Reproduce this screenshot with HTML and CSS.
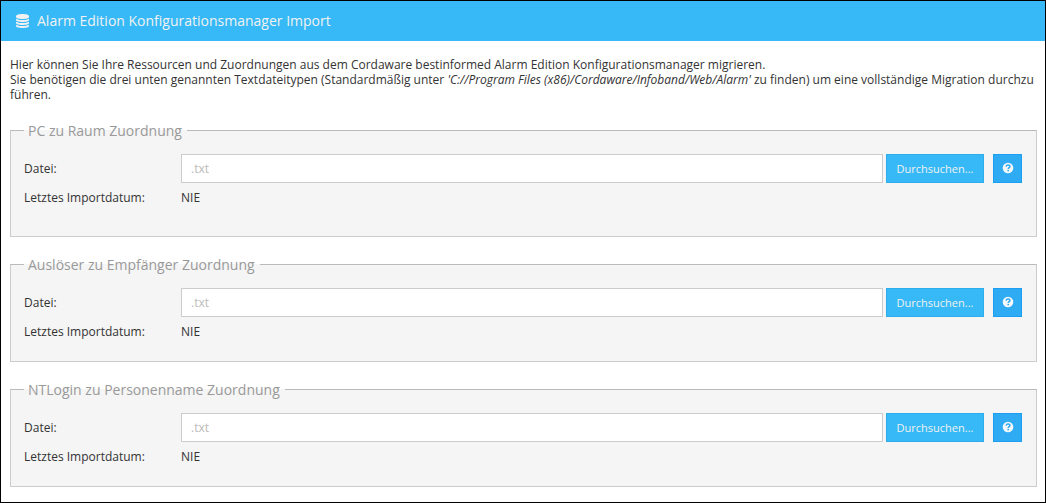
FILE: index.html
```html
<!DOCTYPE html>
<html lang="de">
<head>
<meta charset="utf-8">
<title>Alarm Edition Konfigurationsmanager Import</title>
<link rel="stylesheet" href="styles.css">
</head>
<body>
<svg class="symbols" aria-hidden="true">
  <symbol id="help" viewBox="0 0 12 12">
    <circle cx="6" cy="6" r="5.3" fill="#f4f8fb"/>
    <path d="M4.1 4.6C4.3 3.3 5 2.9 6 2.9c1.100 0 1.900.6 1.900 1.600C7.900 5.600 6.200 5.700 6.200 7" fill="none" stroke="#2fabf4" stroke-width="1.500"/>
    <rect x="5.400" y="7.900" width="1.600" height="1.400" fill="#2fabf4"/>
  </symbol>
</svg>
<main class="window">
  <header class="titlebar">
    <svg class="db-icon" viewBox="0 0 13 14" fill="#f1f1f1" aria-hidden="true">
      <path d="M0 2.300C0 .9 2.900 0 6.500 0S13 .9 13 2.300v.7C13 4.200 10.100 5 6.500 5S0 4.200 0 3z"/>
      <path d="M0 4.700C1.300 5.600 3.800 6 6.500 6S11.700 5.600 13 4.700V6c0 1.200-2.900 2-6.500 2S0 7.200 0 6z"/>
      <path d="M0 7.700C1.300 8.600 3.800 9 6.500 9S11.700 8.600 13 7.700V9c0 1.200-2.900 2-6.500 2S0 10.200 0 9z"/>
      <path d="M0 10.700c1.300.9 3.800 1.300 6.500 1.300s5.200-.4 6.500-1.300V12c0 1.200-2.900 2-6.500 2S0 13.200 0 12z"/>
    </svg>
    <h1 class="title">Alarm Edition Konfigurationsmanager Import</h1>
  </header>
  <div class="content">
    <p class="intro">Hier können Sie Ihre Ressourcen und Zuordnungen aus dem Cordaware bestinformed Alarm Edition Konfigurationsmanager migrieren.<br>Sie benötigen die drei unten genannten Textdateitypen (Standardmäßig unter <em>'C://Program Files (x86)/Cordaware/Infoband/Web/Alarm'</em> zu finden) um eine vollständige Migration durchzuführen.</p>
    <form class="imports">
      <fieldset class="group group-tall">
        <legend class="legend">PC zu Raum Zuordnung</legend>
        <div class="row">
          <label class="label" for="file-room">Datei:</label>
          <input class="file" id="file-room" type="text" placeholder=".txt">
          <button class="browse" type="button">Durchsuchen...</button>
          <button class="help" type="button" aria-label="Hilfe"><svg class="help-icon"><use href="#help"/></svg></button>
        </div>
        <div class="row date"><span class="label">Letztes Importdatum:</span><span>NIE</span></div>
      </fieldset>
      <fieldset class="group">
        <legend class="legend">Auslöser zu Empfänger Zuordnung</legend>
        <div class="row">
          <label class="label" for="file-trigger">Datei:</label>
          <input class="file" id="file-trigger" type="text" placeholder=".txt">
          <button class="browse" type="button">Durchsuchen...</button>
          <button class="help" type="button" aria-label="Hilfe"><svg class="help-icon"><use href="#help"/></svg></button>
        </div>
        <div class="row date"><span class="label">Letztes Importdatum:</span><span>NIE</span></div>
      </fieldset>
      <fieldset class="group">
        <legend class="legend">NTLogin zu Personenname Zuordnung</legend>
        <div class="row">
          <label class="label" for="file-login">Datei:</label>
          <input class="file" id="file-login" type="text" placeholder=".txt">
          <button class="browse" type="button">Durchsuchen...</button>
          <button class="help" type="button" aria-label="Hilfe"><svg class="help-icon"><use href="#help"/></svg></button>
        </div>
        <div class="row date"><span class="label">Letztes Importdatum:</span><span>NIE</span></div>
      </fieldset>
    </form>
  </div>
</main>
</body>
</html>
```
FILE: styles.css
```css
* { box-sizing: border-box; }

body {
  margin: 0;
  background: #fff;
  color: #333;
  font: 12px/15px "Open Sans", "Noto Sans", sans-serif;
}

.symbols { display: none; }

.window {
  min-height: 100vh;
  border: 1px solid #000;
}

.titlebar {
  display: flex;
  align-items: center;
  gap: 8px;
  height: 40px;
  padding: 0 15px;
  background: #36b9f6;
}

.db-icon { width: 13px; height: 14px; }

.title {
  margin: 0;
  color: #f1f1f1;
  font-size: 14px;
  font-weight: 400;
  line-height: 20px;
}

.content { padding: 16px 8px 14px 9px; }

.intro {
  margin: 0;
  word-break: break-all;
}

.imports {
  display: flex;
  flex-direction: column;
  gap: 16px;
  padding-top: 17px;
}

.group {
  min-width: 0;
  margin: 0;
  padding: 13px 14px 22px 13px;
  border: 1px solid #ccc;
  border-top-color: #b9bbb9;
  background: #f5f5f5;
}

.group-tall { padding-bottom: 31px; }

.legend {
  padding: 2px 5px 0 4px;
  color: #999;
  font-size: 14px;
  line-height: 20px;
}

.row {
  display: flex;
  align-items: center;
}

.label {
  flex: none;
  width: 157px;
}

.date { padding-top: 7px; }

.file {
  flex: 1;
  min-width: 0;
  height: 29px;
  padding: 0 9px;
  border: 1px solid #ccc;
  background: #fff;
  color: #333;
  font: inherit;
}

.file::placeholder { color: #bbb; }

.browse,
.help {
  flex: none;
  height: 29px;
  padding: 0;
  border: 1px solid #2faceb;
  background: #36b9f6;
  color: #f1f1f1;
  font: 11px/15px "Open Sans", "Noto Sans", sans-serif;
}

.browse {
  width: 98px;
  margin-left: 3px;
}

.help {
  display: flex;
  justify-content: center;
  align-items: center;
  width: 29px;
  margin-left: 9px;
  padding-bottom: 2px;
  border-color: #1c9ff2;
  background: #2fabf4;
}

.help-icon { width: 12px; height: 12px; }
```
